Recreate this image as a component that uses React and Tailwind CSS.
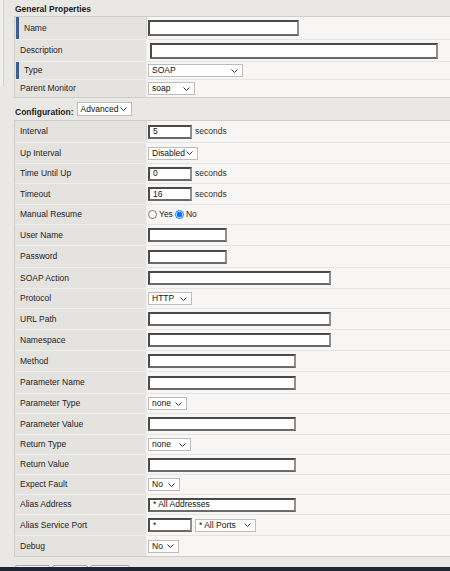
import { useState } from "react";

// little dropdown box, drawn by hand so the chevron matches the old browser look
function Dropdown({ value, width, height = 13 }) {
  return (
    <div
      className="flex items-center justify-between bg-white border border-[#bdbdbd] pl-[3px] pr-[4px] text-[8.5px] leading-none text-[#111] whitespace-nowrap"
      style={{ width, height }}
    >
      <span>{value}</span>
      <svg width="7" height="4" viewBox="0 0 7 4" className="shrink-0">
        <polyline points="0.5,0.5 3.5,3.5 6.5,0.5" fill="none" stroke="#333" strokeWidth="1" />
      </svg>
    </div>
  );
}

function TextBox({ width, value = "", height = 14 }) {
  return (
    <div
      className="flex items-center bg-white border-2 border-t-[#4a4a4a] border-l-[#4a4a4a] border-r-[#8f8f8f] border-b-[#6a6a6a] pl-[3px] text-[8.5px] leading-none text-[#111] whitespace-nowrap"
      style={{ width, height }}
    >
      {value}
    </div>
  );
}

function Row({ label, height, required, first, children }) {
  return (
    <div className="flex" style={{ height }}>
      <div
        className={
          "w-[132px] shrink-0 flex items-center bg-[#e5e3e0] border-r border-[#d6d4d1] " +
          (first ? "" : "border-t border-[#efeeec]")
        }
      >
        {required ? (
          <>
            <div className="w-[3px] h-full bg-[#3b5f94] ml-[1px]" />
            <span className="pl-[5px]">{label}</span>
          </>
        ) : (
          <span className="pl-[5px]">{label}</span>
        )}
      </div>
      <div
        className={
          "flex-1 flex items-center gap-[3px] bg-[#f7f6f4] pl-[1px] " +
          (first ? "" : "border-t border-[#e6e4e1]")
        }
      >
        {children}
      </div>
    </div>
  );
}

const seconds = <span className="text-[8.5px] text-[#333]">seconds</span>;

export default function App() {
  const [resume, setResume] = useState("no");

  const config = [
    { label: "Interval", h: 21, el: <><TextBox width={44} value="5" />{seconds}</> },
    { label: "Up Interval", h: 21, el: <Dropdown value="Disabled" width={50} /> },
    { label: "Time Until Up", h: 20, el: <><TextBox width={44} value="0" />{seconds}</> },
    { label: "Timeout", h: 21, el: <><TextBox width={44} value="16" />{seconds}</> },
    {
      label: "Manual Resume",
      h: 20,
      el: (
        <div className="flex items-center text-[8.5px] text-[#222]">
          <input
            type="radio"
            name="resume"
            checked={resume === "yes"}
            onChange={() => setResume("yes")}
            className="w-[9px] h-[9px] m-0"
          />
          <span className="ml-[2px] mr-[2px]">Yes</span>
          <input
            type="radio"
            name="resume"
            checked={resume === "no"}
            onChange={() => setResume("no")}
            className="w-[9px] h-[9px] m-0"
          />
          <span className="ml-[2px]">No</span>
        </div>
      ),
    },
    { label: "User Name", h: 21, el: <TextBox width={79} /> },
    { label: "Password", h: 22, el: <TextBox width={79} /> },
    { label: "SOAP Action", h: 21, el: <TextBox width={183} /> },
    { label: "Protocol", h: 20, el: <Dropdown value="HTTP" width={44} /> },
    { label: "URL Path", h: 21, el: <TextBox width={183} /> },
    { label: "Namespace", h: 21, el: <TextBox width={183} /> },
    { label: "Method", h: 21, el: <TextBox width={148} /> },
    { label: "Parameter Name", h: 22, el: <TextBox width={148} /> },
    { label: "Parameter Type", h: 20, el: <Dropdown value="none" width={39} /> },
    { label: "Parameter Value", h: 21, el: <TextBox width={148} /> },
    { label: "Return Type", h: 20, el: <Dropdown value="none" width={43} /> },
    { label: "Return Value", h: 20, el: <TextBox width={148} /> },
    { label: "Expect Fault", h: 20, el: <Dropdown value="No" width={32} /> },
    { label: "Alias Address", h: 20, el: <TextBox width={148} value="* All Addresses" /> },
    {
      label: "Alias Service Port",
      h: 21,
      el: <><TextBox width={44} value="*" /><Dropdown value="* All Ports" width={61} /></>,
    },
    { label: "Debug", h: 21, el: <Dropdown value="No" width={31} /> },
  ];

  return (
    <div
      className="w-[450px] h-[571px] overflow-hidden flex flex-col bg-[#e9e8e5] text-[8.5px] text-[#222]"
      style={{ fontFamily: '"Liberation Sans", Arial, sans-serif' }}
    >
      <div className="flex-1 flex overflow-hidden">
        <div className="w-[4px] h-[86px] shrink-0 bg-[#f1f0ee] border-r border-[#d3d1ce]" />

        <div className="pl-[10px] w-[446px] shrink-0">
          <div className="font-bold h-[16px] pt-[5px] pl-[1px] leading-none">General Properties</div>

          <div className="border-l border-b border-t border-[#cfcdca]">
            <Row label="Name" height={22} required first>
              <TextBox width={151} height={16} />
            </Row>
            <Row label="Description" height={22}>
              <div className="pl-[2px]">
                <TextBox width={288} height={16} />
              </div>
            </Row>
            <Row label="Type" height={18} required>
              <Dropdown value="SOAP" width={95} />
            </Row>
            <Row label="Parent Monitor" height={18}>
              <Dropdown value="soap" width={47} />
            </Row>
          </div>

          <div className="flex items-center h-[22px] pt-[2px] pl-[1px]">
            <span className="font-bold mt-[5px]">Configuration:</span>
            <div className="ml-[3px] mb-[2px]">
              <Dropdown value="Advanced" width={55} height={14} />
            </div>
          </div>

          <div className="border-l border-b border-t border-[#cfcdca]">
            {config.map((r, i) => (
              <Row key={r.label} label={r.label} height={r.h} first={i === 0}>
                {r.el}
              </Row>
            ))}
          </div>

          <div className="flex gap-[2px] mt-[8px] pl-[1px]">
            <div className="w-[35px] h-[20px] bg-[#f4f4f4] border border-[#a9a9a9] rounded-[2px]" />
            <div className="w-[36px] h-[20px] bg-[#f4f4f4] border border-[#a9a9a9] rounded-[2px]" />
            <div className="w-[40px] h-[20px] bg-[#f4f4f4] border border-[#a9a9a9] rounded-[2px]" />
          </div>
        </div>
      </div>
      <div className="h-[4px] shrink-0 bg-[#1d2737]" />
    </div>
  );
}
